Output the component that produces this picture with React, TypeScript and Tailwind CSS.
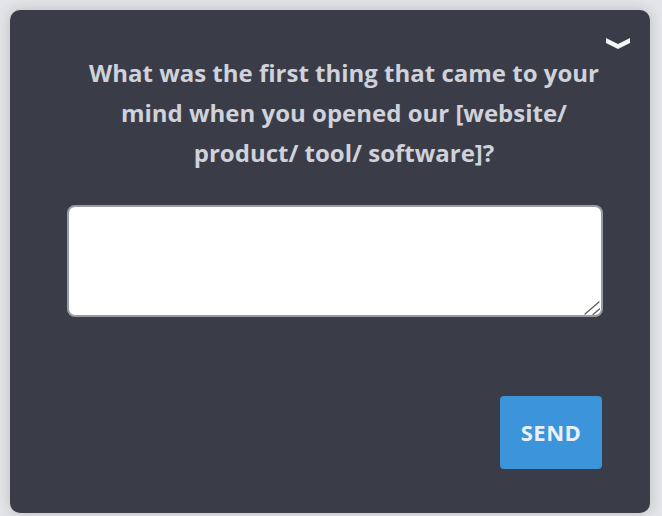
export default function App() {
  return (
    <div className="h-[516px] w-full overflow-hidden bg-[#e3e5e9] pl-[10px] pr-[12px] pt-[10px] font-['Open_Sans',sans-serif]">
      <div className="relative h-[503px] w-[640px] rounded-[10px] bg-[#3a3d47] pt-[43px] shadow-[0_0_14px_rgba(0,0,0,0.18)]">
        <button
          type="button"
          aria-label="Collapse"
          className="absolute right-[20px] top-[28px] text-[#f4f5f7]"
        >
          <svg width="24" height="11" viewBox="0 0 24 11" fill="currentColor">
            <polygon points="0,0 12,6 24,0 24,5 12,11 0,5" />
          </svg>
        </button>

        <p className="ml-[57px] mr-[29px] text-center text-[24px] font-bold leading-[40px] text-[#cfd2db]">
          What was the first thing that came to your mind when you opened our [website/ product/ tool/ software]?
        </p>

        <div className="relative ml-[57px] mt-[32px] w-[536px]">
          <textarea className="block h-[112px] w-full resize-none rounded-[8px] border-2 border-[#9a9ca4] bg-white px-3 py-2 text-base text-[#333] outline-none" />
          <svg
            className="pointer-events-none absolute bottom-[2px] right-[3px]"
            width="16"
            height="14"
            viewBox="0 0 16 14"
            stroke="#5a5c62"
            strokeWidth="1.3"
            strokeLinecap="round"
          >
            <line x1="1" y1="13" x2="15" y2="1" />
            <line x1="9" y1="13.5" x2="15.5" y2="8" />
          </svg>
        </div>

        <div className="mt-[79px] flex w-[592px] justify-end">
          <button
            type="button"
            className="h-[73px] w-[102px] rounded-[4px] bg-[#3c94db] text-[22px] font-bold tracking-[0.5px] text-[#eaf0f6]"
          >
            SEND
          </button>
        </div>
      </div>
    </div>
  );
}
